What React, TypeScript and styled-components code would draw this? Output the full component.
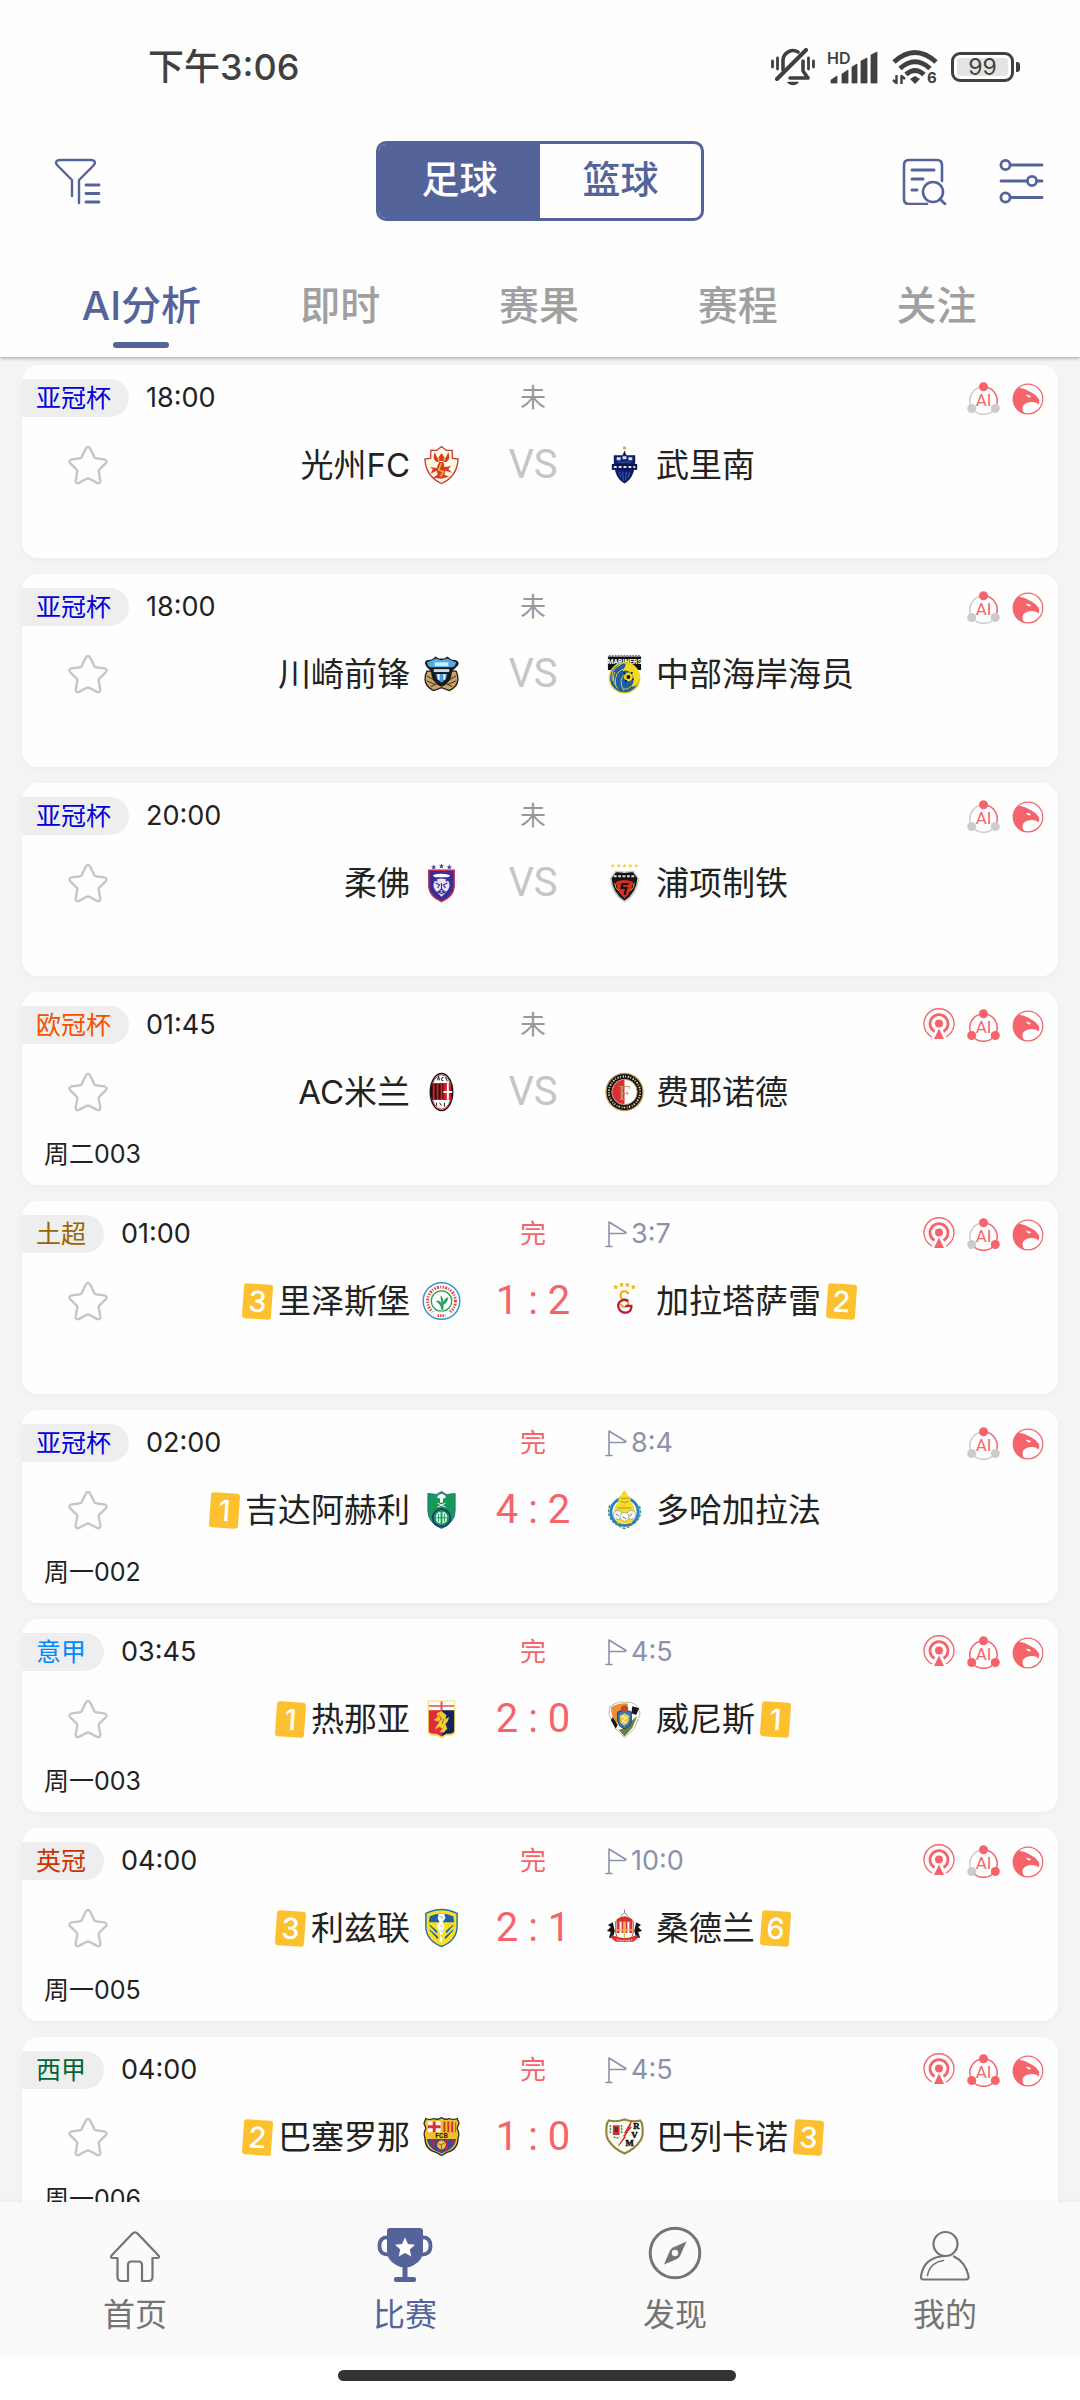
import React, { useState } from "react";
import styled, { createGlobalStyle, css } from "styled-components";

const BRAND = "#54649b";
const RED = "#f5646a";
const FONT = `Inter, "Noto Sans CJK SC", sans-serif`;

const GlobalStyle = createGlobalStyle`
  * { box-sizing: border-box; }
  body { margin: 0; background: #fff; font-family: ${FONT}; color: #222; }
  button { font: inherit; color: inherit; background: none; border: 0; padding: 0; margin: 0; cursor: pointer; }
  svg { display: block; flex: none; }
`;

const Screen = styled.div`
  display: flex;
  flex-direction: column;
  height: 100vh;
  background: #f4f4f4;
  overflow: hidden;
`;

/* ---------- header ---------- */

const Header = styled.header`
  flex: none;
  background: #fefefe;
  box-shadow: 0 1px 4px rgba(0, 0, 0, 0.35);
  z-index: 1;
`;

const StatusBar = styled.div`
  display: flex;
  align-items: center;
  justify-content: space-between;
  height: 134px;
  padding: 0 60px 0 148px;
  color: #404040;
`;

const Clock = styled.time`
  font-size: 36px;
  line-height: 52px;
  font-weight: 500;
`;

const StatusIcons = styled.div`
  display: flex;
  align-items: center;
  gap: 12px;
`;

const Battery = styled.div`
  display: flex;
  align-items: center;
  gap: 2px;
`;

const BatteryShell = styled.span`
  display: flex;
  width: 63px;
  height: 30px;
  padding: 3px;
  border: 3px solid #404040;
  border-radius: 9px;
`;

const BatteryFill = styled.span`
  flex: 1;
  border-radius: 3px;
  background: #e4e4e4;
  font-size: 23px;
  line-height: 19px;
  text-align: center;
`;

const BatteryTip = styled.span`
  width: 4px;
  height: 10px;
  border-radius: 0 3px 3px 0;
  background: #404040;
`;

const Toolbar = styled.div`
  display: grid;
  grid-template-columns: 1fr 328px 1fr;
  align-items: center;
  height: 94px;
`;

const Tools = styled.div`
  display: flex;
  gap: 52px;
  padding-left: 54px;
  &:last-child {
    justify-content: flex-end;
    padding: 0 36px 0 0;
  }
`;

const IconButton = styled.button`
  display: block;
  line-height: 0;
`;

const Segmented = styled.div`
  display: flex;
  height: 80px;
  border: 3px solid ${BRAND};
  border-radius: 10px;
  overflow: hidden;
`;

const Segment = styled.button<{ $active: boolean }>`
  && {
    flex: 1;
    padding-bottom: 4px;
    font-size: 38px;
    font-weight: 500;
    line-height: 70px;
    color: ${(p) => (p.$active ? "#fff" : BRAND)};
    background: ${(p) => (p.$active ? BRAND : "transparent")};
  }
`;

const Tabs = styled.nav`
  display: flex;
  height: 129px;
  padding: 0 44px 9px 42px;
`;

const Tab = styled.button<{ $active: boolean }>`
  && {
    flex: 1;
    display: flex;
    flex-direction: column;
    justify-content: flex-end;
    align-items: center;
    gap: 6px;
    font-size: 40px;
    line-height: 60px;
    font-weight: 500;
    color: ${(p) => (p.$active ? BRAND : "#a0a0a0")};
  }
  &::after {
    content: "";
    width: 56px;
    height: 6px;
    border-radius: 3px;
    background: ${(p) => (p.$active ? BRAND : "transparent")};
  }
`;

/* ---------- match list ---------- */

const List = styled.main`
  flex: 1;
  min-height: 0;
  display: flex;
  flex-direction: column;
  gap: 16px;
  padding: 8px 22px 0;
  overflow-y: auto;
  scrollbar-width: none;
`;

const Card = styled.article`
  flex: none;
  display: flex;
  flex-direction: column;
  padding: 14px 14px 16px 0;
  background: #fefefe;
  border-radius: 16px;
  box-shadow: 0 2px 6px rgba(0, 0, 0, 0.03);
`;

const threeColumns = css`
  display: grid;
  grid-template-columns: 1fr 144px 1fr;
  align-items: center;
`;

const InfoRow = styled.div`
  ${threeColumns}
  height: 38px;
  font-size: 27px;
  line-height: 38px;
`;

const TeamsRow = styled.div`
  ${threeColumns}
  height: 40px;
  margin: 28px 0 27px;
`;

const Kickoff = styled.div`
  display: flex;
  gap: 17px;
`;

const League = styled.span<{ $color: string }>`
  padding: 0 18px 0 14px;
  border-radius: 0 19px 19px 0;
  background: #eee;
  color: ${(p) => p.$color};
  font-size: 25px;
  line-height: 38px;
`;

const State = styled.span<{ $done: boolean }>`
  text-align: center;
  font-size: 26px;
  color: ${(p) => (p.$done ? RED : "#999")};
`;

const Extras = styled.div`
  display: flex;
  align-items: center;
  justify-content: space-between;
`;

const Corners = styled.span`
  display: flex;
  align-items: center;
  gap: 4px;
  color: #8b92a9;
`;

const Marks = styled.span`
  display: flex;
  align-items: center;
  gap: 12px;
`;

const HomeSide = styled.div`
  display: flex;
  align-items: center;
  justify-content: space-between;
  padding-left: 46px;
`;

const Team = styled.div`
  display: flex;
  align-items: center;
  gap: 12px;
  font-size: 33px;
  line-height: 40px;
`;

const NameGroup = styled.span`
  display: flex;
  align-items: center;
  gap: 6px;
`;

const YellowCards = styled.span`
  width: 29px;
  height: 35px;
  border-radius: 3px;
  background: #fdc02f;
  color: #fff;
  font-size: 29px;
  line-height: 36px;
  font-weight: 500;
  text-align: center;
  rotate: 4deg;
`;

const Score = styled.span<{ $done: boolean }>`
  font-family: Roboto, sans-serif;
  font-size: 40px;
  line-height: 40px;
  text-align: center;
  color: ${(p) => (p.$done ? RED : "#c6c6c6")};
`;

const Serial = styled.div`
  height: 30px;
  padding-left: 22px;
  font-size: 25px;
  line-height: 30px;
`;

/* ---------- bottom navigation ---------- */

const Footer = styled.footer`
  flex: none;
  background: #fff;
  z-index: 1;
`;

const BottomNav = styled.nav`
  display: flex;
  height: 154px;
  background: #fafafa;
  box-shadow: 0 -1px 5px rgba(0, 0, 0, 0.04);
`;

const NavItem = styled.button<{ $active: boolean }>`
  && {
    flex: 1;
    display: flex;
    flex-direction: column;
    align-items: center;
    gap: 9px;
    padding-top: 24px;
    font-size: 32px;
    line-height: 44px;
    color: ${(p) => (p.$active ? BRAND : "#747474")};
  }
`;

const GestureArea = styled.div`
  height: 44px;
  padding: 14px 6px 0 0;
`;

const GestureBar = styled.div`
  width: 37%;
  height: 11px;
  margin: 0 auto;
  border-radius: 6px;
  background: #333;
`;

/* ---------- interface icons ---------- */

const line = { fill: "none", stroke: "currentColor", strokeLinecap: "round", strokeLinejoin: "round" } as const;

const MutedBell = () => (
  <svg width="44" height="38" viewBox="0 0 44 38" {...line} strokeWidth="3.6">
    <path d="M12 22V12a10 10 0 0 1 15-8M32 13v10l5 7H19" />
    <path d="M6 31 35 2" strokeWidth="4" />
    <path d="M17 34.500h10q-5 4-10 0z" strokeWidth="1.500" fill="currentColor" />
    <path d="M1.500 13v6M6.500 10v11M37.500 10v11M42.500 13v6" strokeWidth="2.800" />
  </svg>
);

const Signal = () => (
  <svg width="52" height="40" viewBox="0 0 52 40" fill="currentColor">
    <text x="0" y="17" fontSize="16" fontWeight="600" fontFamily="Inter, sans-serif">HD</text>
    <path d="M4 33 10 29v7H4zM15 27l6-4v13h-6zM25 20l5-3v19h-5zM34 14l6-3v25h-6zM44 8l6-3v31h-6z" stroke="currentColor" strokeWidth=".8" strokeLinejoin="round" />
  </svg>
);

const Wifi = () => (
  <svg width="48" height="42" viewBox="-1 -3 48 42" {...line} strokeLinecap="butt" strokeWidth="5">
    <path d="M2 13Q23-6 44 13" />
    <path d="M8 19.500Q23 6 38 19.500" />
    <path d="M14 25.500Q23 17.500 32 25.500" />
    <path d="m18 30 5-3 5 3-5 5z" fill="currentColor" stroke="none" />
    <path d="M4.500 26v8l-3.500-3M9.500 35v-8l3.500 3" strokeWidth="2.400" />
    <text x="35" y="34" fontSize="15" fontWeight="700" fontFamily="Inter, sans-serif" fill="currentColor" stroke="none">6</text>
  </svg>
);

const FilterIcon = () => (
  <svg width="47" height="47" viewBox="0 0 47 47" {...line} stroke={BRAND} strokeWidth="2.400">
    <path d="M18 38V22L4 8Q1 5 2.500 3.300 3.500 2 6 2h31q2.500 0 3.500 1.300Q42 5 39 8L25 22v23" />
    <path d="M32 27h13M32 35.500h13M32 44h13" strokeWidth="2.800" />
  </svg>
);

const ReportIcon = () => (
  <svg width="45" height="47" viewBox="0 0 45 47" {...line} stroke={BRAND} strokeWidth="2.600">
    <path d="M40 23V7q0-5-5-5H7Q2 2 2 7v34q0 5 5 5h18" />
    <path d="M10 12h22M10 21h11M10 32h5" strokeWidth="3" />
    <circle cx="31" cy="34" r="10" />
    <path d="m38 41 5 5" />
  </svg>
);

const SlidersIcon = () => (
  <svg width="45" height="46" viewBox="0 0 45 46" {...line} stroke={BRAND} strokeWidth="2.800">
    <circle cx="6.500" cy="7" r="4.600" /><path d="M11.500 7H43" />
    <circle cx="33" cy="23" r="4.600" /><path d="M2 23h26M38 23h5" />
    <circle cx="6.500" cy="39.500" r="4.600" /><path d="M11.500 39.500H43" />
  </svg>
);

const FlagIcon = () => (
  <svg width="22" height="28" viewBox="0 0 22 28" {...line} strokeWidth="1.600">
    <path d="M4 26V2l17 10.500Q21 13.500 18 13.500H4M1 26.500h6" />
  </svg>
);

const StarIcon = () => (
  <svg width="40" height="40" viewBox="0 0 40 40" {...line} stroke="#c6c6c6" strokeWidth="2.400">
    <path d="M17.700 3.800q2.300-3.600 4.600 0l3.900 8.200q.5 1 1.600 1.200l8.400 1.200q3.800 1 1.500 3.900l-6.400 6.400q-.8.800-.6 1.900l1.600 8.800q.2 3.700-3.300 2.500l-7.700-4.100q-1.300-.6-2.600 0L11 37.900q-3.500 1.200-3.300-2.500l1.600-8.800q.2-1.100-.6-1.900l-6.400-6.400q-2.300-2.900 1.500-3.900l8.400-1.200q1.100-.2 1.600-1.200z" />
  </svg>
);

const LiveIcon = () => (
  <svg width="32" height="35" viewBox="0 0 32 35" fill="none" stroke={RED}>
    <path d="M9 29A15 15 0 1 1 23 29" strokeWidth="1.300" />
    <path d="M11.500 23.500a9 9 0 1 1 9 0" strokeWidth="2.800" />
    <circle cx="16" cy="15.500" r="4" fill={RED} stroke="none" />
    <path d="M16 20.500 21 31H11z" fill={RED} stroke="none" />
  </svg>
);

const AiIcon = ({ level }: { level: number }) => {
  const right = level > 1 ? RED : "#ccc";
  const left = level > 2 ? RED : "#ccc";
  return (
    <svg width="33" height="33" viewBox="0 0 33 33" fill="none" strokeWidth="1.500">
      <path d="M16.500 5A13.500 13.500 0 0 1 28.500 25" stroke={RED} />
      <path d="M28.500 25a13.500 13.500 0 0 1-24 0" stroke={right} />
      <path d="M4.500 25A13.500 13.500 0 0 1 16.500 5" stroke={left} />
      <circle cx="16.500" cy="4.800" r="4.500" fill={RED} />
      <circle cx="4.700" cy="26.500" r="4.500" fill={left} />
      <circle cx="28.300" cy="26.500" r="4.500" fill={right} />
      <text x="16.500" y="24" textAnchor="middle" fontSize="17" fontFamily="Roboto, sans-serif" fill={RED}>AI</text>
    </svg>
  );
};

const EagleIcon = () => (
  <svg width="32" height="34" viewBox="0 0 32 34">
    <circle cx="16" cy="18" r="14.800" fill="#fff" stroke={RED} strokeWidth="1.200" />
    <path d="M6.500 6.500q7 1 13 5 4 2 6 5 3 2 1 7-2-3-7-2.500-8 .5-9 5.500-.3 3 2 6Q3 29.500 1.200 19.500.8 11 6.500 6.500z" fill={RED} />
    <path d="m14 13.500 5 1.500-1 1.500q-3 0-4-3z" fill="#fff" />
  </svg>
);

const HomeIcon = () => (
  <svg width="54" height="58" viewBox="0 0 54 58" {...line} strokeWidth="2.200">
    <path d="M24.500 7.500q2.500-2.500 5 0L50 29q2.500 3-1 3h-4.500v19q0 4-4 4H34V39q0-3.500-3.500-3.500h-7Q20 35.500 20 39v16h-6.500q-4 0-4-4V32H5q-3.500 0-1-3z" />
  </svg>
);

const TrophyIcon = () => (
  <svg width="56" height="58" viewBox="0 0 56 58" fill="currentColor">
    <path d="M10 5q0-3 3-3h30q3 0 3 3v20q0 9-9 14-4 2.500-9 2.500T19 39q-9-5-9-14z" />
    <path d="M11 11.500q-8.500-.5-8.500 8.500T12 28.500M45 11.500q8.500-.5 8.500 8.500T44 28.500" fill="none" stroke="currentColor" strokeWidth="3.800" />
    <path d="M25.500 40h5v12h-5z" /><rect x="17" y="51" width="22" height="5" rx="2" />
    <path d="m28 11.500 3 6.500 7 .8-5.200 4.700 1.500 7L28 27l-6.300 3.500 1.500-7L18 18.800l7-.8z" fill="#fff" />
  </svg>
);

const CompassIcon = () => (
  <svg width="56" height="58" viewBox="0 0 56 58" {...line}>
    <circle cx="28" cy="27" r="24.800" strokeWidth="3" />
    <path d="m39.500 15.500-6.500 14.500q-1 2-3 3l-13 5.500 6-14q1-2 3-3z" fill="currentColor" stroke="none" />
    <circle cx="28" cy="27" r="3.200" fill="#fafafa" stroke="none" />
  </svg>
);

const UserIcon = () => (
  <svg width="54" height="58" viewBox="0 0 54 58" {...line} strokeWidth="2.200">
    <circle cx="27.500" cy="18" r="12" />
    <path d="M27 30Q6 31 3 50q-.5 3.500 2.500 3.500H48q3 0 2.500-3.500-3-14-14.500-19.500" />
    <path d="M25.500 34.500Q12 36.500 9.500 49.500" strokeWidth="1.600" />
  </svg>
);

/* ---------- club crests, all on a 40 x 40 grid ---------- */

const SHIELD = "M5 5Q20-1 35 5V20Q34 32 20 39 6 32 5 20z";

const crests: Record<string, React.ReactNode> = {
  gwangju: (
    <>
      <path d="M20 1 25 5h6v8l6 1q-1 18-17 25Q4 32 3 14l6-1V5h6z" fill="#fffbe9" stroke="#c8352f" strokeWidth="1.300" />
      <path d="M13 7q-3 7 2 10h10q5-3 2-10l-3 6-4-5-4 5zM18 16h4l1 6 7-1-3 3 4 4-7-2-1 4 5 2-8 2-9-1 5-3-1-4-6 3 2-5-3-2 7 1z" fill="#dc3b25" />
      <path d="M17 12v4M23 12v4M20 18l-3 7 5 2-3 5" stroke="#f7b63c" strokeWidth="1.500" fill="none" />
    </>
  ),
  buriram: (
    <>
      <circle cx="20" cy="2.500" r="1.700" fill="#f1a334" />
      <path d="m20 5 2 5h9v7q-1 17-11 22Q10 34 9 17v-7h9z" fill="#0d1f6c" />
      <path d="M7 19h26v6H7z" fill="#0a1550" />
      <path d="M12 12h4v3h-4zM18 11h4v3h-4zM24 12h4v3h-4zM9 21h3v2H9zM14 21h3v2h-3zM19 21h3v2h-3zM24 21h3v2h-3zM29 21h2v2h-2z" fill="#d9e2f6" />
      <path d="m15 27 1 6M18 27l1 9M22 27l-1 9M25 27l-1 6M13 17h14" stroke="#4a6bc0" strokeWidth=".8" />
    </>
  ),
  kawasaki: (
    <>
      <path d="M5 17Q-1 31 12 37l8-3 8 3q13-6 7-20z" fill="#c6a46c" stroke="#211d19" strokeWidth="1.300" />
      <path d="m5 22 7 4M5 27l9 4M35 22l-7 4M35 27l-9 4M9 33l6-3M31 33l-6-3" stroke="#3b2d18" />
      <path d="M10 5 14 2l3 2h6l3-2 4 3 5 1q4 2 2 5l-4 4-2 2q-1 13-11 16-10-3-11-16l-4-4Q1 8 5 6z" fill="#151b22" />
      <path d="M5 8q5-2 9-4l6 2 6-2q4 2 9 4-1 5-4 5H9Q6 13 5 8z" fill="#55a9e0" />
      <path d="M13 8h14v4H13z" fill="#c9ebff" />
      <path d="M12 15h16v3H12z" fill="#d8d8d8" />
      <path d="M14 20h12q-1 6-6 9-5-3-6-9z" fill="#3d9adb" /><path d="M16 20h2v6h-2zM22 20h2v6h-2z" fill="#fff" />
    </>
  ),
  mariners: (
    <>
      <path d="M3 2h34v14H3z" fill="#111" />
      <path d="M4 1h32" stroke="#777" strokeDasharray="2 1" />
      <text x="20" y="10" fontSize="7" fontWeight="700" textAnchor="middle" fill="#fff" fontFamily="Roboto, sans-serif">MARINERS</text>
      <circle cx="20" cy="24" r="15.500" fill="#1d5ea8" stroke="#ecd12d" strokeWidth="1.500" />
      <path d="M21 9q16 2 14 16-1 8-8 8 5-8 0-14-4-4-9-2 4-6 3-8z" fill="#f4d820" />
      <path d="M17 10Q4 15 8 27M23 14Q8 16 11 32M21 20q-8 5-2 17M10 18q-4 8 3 17M27 32q-4 5-8 3" fill="none" stroke="#f0d530" strokeWidth=".9" />
      <circle cx="24" cy="23" r="4.500" fill="#f4d820" /><circle cx="24" cy="23" r="2" fill="#111" />
      <path d="m19 19 2 1M28 18l-1 2M29 26l-1-1M21 28l1-2" stroke="#111" strokeWidth="1.500" />
    </>
  ),
  johor: (
    <>
      <path d="m12 1 1 2h2l-2 1 1 2-2-1-2 1 1-2-2-1h2zM20 0l1 2h2l-2 1 1 2-2-1-2 1 1-2-2-1h2zM28 1l1 2h2l-2 1 1 2-2-1-2 1 1-2-2-1h2z" fill="#43349b" />
      <path d="M7 7h26v17q-1 10-13 15Q8 34 7 24z" fill="#3a2d97" stroke="#c02c50" strokeWidth="1.500" />
      <path d="M11 12q8-3 18 0l-2 2H13z" fill="#fff" />
      <path d="M13 18q7-5 14 0 3 5-1 10l-6 6-6-6q-4-5-1-10z" fill="#e5e4f5" />
      <path d="m14 20 4 2-2 3M26 20l-4 2 2 3M20 20v6l-3 3h6l-3-3M15 29l5 2 5-2M12 17l4 1M28 17l-4 1" stroke="#3a2d97" fill="none" strokeWidth="1.200" />
    </>
  ),
  pohang: (
    <>
      {[8, 14, 20, 26, 32].map((x) => (
        <path key={x} transform={`translate(${x - 2} 0)`} d="m2 0 .7 1.500h1.600L3 2.600l.6 1.700L2 3.300.5 4.300 1 2.600-.2 1.500h1.500z" fill="#f5d04b" />
      ))}
      <path d="m11 8 9 1 9-1 5 7q-1 16-14 24Q7 31 6 15z" fill="#141414" stroke="#c9cacc" strokeWidth="1.600" />
      <path d="M11 19q9-4 18 0-2 11-9 17-7-6-9-17z" fill="#dc2b22" />
      <path d="M9 13h22" stroke="#d9d9d9" strokeDasharray="3 1.500" strokeWidth="2" />
      <path d="M24 21h-6l-1 4h5l-2 7" fill="none" stroke="#141414" strokeWidth="2.200" />
      <path d="M10 20q0 5 4 8M30 20q0 5-4 8" stroke="#e6b33c" fill="none" />
    </>
  ),
  milan: (
    <>
      <ellipse cx="20" cy="20" rx="11.500" ry="19" fill="#fff" stroke="#1a1315" strokeWidth="1.500" />
      <ellipse cx="20" cy="20" rx="10.400" ry="17.800" fill="none" stroke="#c9232d" />
      <path d="M10 11h20q2 9 0 17H10q-2-8 0-17z" fill="#18120f" />
      <path d="M11 11h2v17h-2zM15 11h2v17h-2zM19 11h2v17h-2zM22 11h8v17h-8z" fill="#d81f2b" />
      <path d="M22 19h9v2h-9zM25.500 11h2v17h-2z" fill="#fff" />
      <path d="m16 8 1-4 1 4M22 5q-2 0-2 2t2 1M24 5l2 4M15 31v3M18 31l2 3M23 31v4" stroke="#18120f" fill="none" />
    </>
  ),
  feyenoord: (
    <>
      <circle cx="20" cy="20" r="19" fill="#17120f" stroke="#b89b60" strokeWidth="1.300" />
      <circle cx="20" cy="20" r="16" fill="none" stroke="#e0d2ae" strokeWidth="2" strokeDasharray="1 1.700 1.500 1.200" />
      <circle cx="20" cy="20" r="13" fill="#fff" stroke="#b89b60" />
      <path d="M20 7.500a12.500 12.500 0 0 0 0 25z" fill="#dd2d3a" />
      <text x="20" y="28" fontSize="22" textAnchor="middle" fontFamily="Liberation Serif, serif" fill="#bb9a57">F</text>
    </>
  ),
  rize: (
    <>
      <circle cx="20" cy="20" r="18.800" fill="#fff" stroke="#3195cf" strokeWidth="1.500" />
      <circle cx="20" cy="20" r="14.300" fill="none" stroke="#dc4a3e" strokeWidth="3" strokeDasharray="1.500 1.300 2 1.200 1 1.500" />
      <circle cx="20" cy="20" r="10.500" fill="#fff" stroke="#2a9d5a" strokeWidth="1.300" />
      <path d="M20 29q-1-6-6-9 5-1 6 3-1-6-1-9 4 3 2 9 1-5 6-7 0 5-5 8v5z" fill="#24a257" />
      <path d="M10 31h20l-3 5H13z" fill="#fff" /><path d="M16 35h8" stroke="#dc4a3e" strokeWidth="2.600" strokeDasharray="1.500 1" />
    </>
  ),
  galatasaray: (
    <>
      {[[10, 5], [16, 2.5], [22, 2.5], [28, 5]].map(([x, y]) => (
        <path key={x} transform={`translate(${x} ${y})`} d="m1-2 .8 1.700 2 .2L2.200 1.300l.5 2L1 2.300l-1.700 1 .5-2-1.600-1.400 2-.2z" fill="#f1b32d" />
      ))}
      <path d="M24 13q-1-3-4-3-4 0-4 4t4 5q4 1 4 4t-4 3q-3 0-4-3" fill="none" stroke="#f2a521" strokeWidth="2.200" />
      <path d="M24 20q-5-3-9 1-3 4 0 8 2 3 6 3 5 0 6-5v-2h-6" fill="none" stroke="#b41f36" strokeWidth="2.300" />
    </>
  ),
  ahli: (
    <>
      <path d="m6 3 9 1 5-3 5 3 9-1v18q0 12-14 18Q6 33 6 21z" fill="#189a57" stroke="#23598f" strokeWidth=".8" />
      <circle cx="20" cy="28" r="9" fill="#189a57" stroke="#1e3a78" strokeWidth="2" />
      <path d="M17 5q3-2 6 0l1 2-3 1v4h-2V8l-3-1zM16 13l8 4M24 13l-8 4" stroke="#fff" strokeWidth="1" fill="#fff" />
      <path d="M14 27q1-5 5-5v12l-4-2zM26 27q-1-5-5-5v12l4-2z" fill="#e9f7ef" /><path d="M13 28h14M17 24v8M23 24v8" stroke="#189a57" />
    </>
  ),
  gharafa: (
    <>
      <path d="M5 15q-6 16 15 24 21-8 15-24" fill="none" stroke="#3c9c79" strokeWidth="1.500" strokeDasharray="3 1.300" />
      <circle cx="20" cy="22" r="14" fill="#fff" stroke="#2b83c5" strokeWidth="3" />
      <path d="M20 0q3 2 3 5 4 0 3 6l4 6q2 7-3 17H13q-5-10-3-17l4-6q-1-6 3-6 0-3 3-5z" fill="#f6dc26" />
      <path d="M16 8h8M16 11q4 3 8 0M13 18h14" stroke="#9f9c24" fill="none" />
      <circle cx="13" cy="25" r="4.500" fill="#f9f9f9" stroke="#8b9a96" strokeWidth=".8" />
      <circle cx="27" cy="25" r="4.500" fill="#f9f9f9" stroke="#8b9a96" strokeWidth=".8" />
      <circle cx="20" cy="27" r="4.500" fill="#fff" stroke="#8b9a96" strokeWidth=".8" />
      <path d="m11 24 3 2M25 26l3-2M18 27l4 2M13 34q7 3 14 0" stroke="#5a6d77" fill="none" />
    </>
  ),
  genoa: (
    <>
      <path d="M6 1h28v34q-5 3-9 2l-5 3-5-3q-5 1-9-2z" fill="#f3dc5d" />
      <path d="M7 2h26v9H7z" fill="#fff" /><path d="M7 6h26v1.500H7zM19 2h2v9h-2z" fill="#e0504b" />
      <path d="M7 11h13v27l-5-3q-5 1-8-2z" fill="#dd2c3a" /><path d="M20 11h13v22q-3 3-8 2l-5 3z" fill="#13265b" />
      <path d="m15 14 5-2 5 4-1 4 4-2-2 5-2 2 2 5-4 4-4-1 3-3-3-2-5 3 2-4 3-4-6-2 4-3z" fill="#f3cd2f" />
      <path d="m17 16 3 3-2 3M22 20l-1 5" stroke="#8c5c1a" fill="none" />
    </>
  ),
  venezia: (
    <>
      <path d="M5 7Q15 1 20 3q7-2 14 5l2 7-6 15-10 9-9-9L4 15z" fill="#fff" stroke="#b9b9a4" />
      <path d="M6 8q8-5 18-4l-3 8-9 12-5-8z" fill="#ec8f32" /><path d="m28 7 7 2-3 7-5-2zM8 18l5 8-2 4-5-9z" fill="#181818" />
      <path d="m33 17-5 12-8 9-6-7 4-1z" fill="#6b7f3f" />
      <path d="M13 13q7-4 14 0v9q-1 6-7 8-6-2-7-8z" fill="#3a77b5" stroke="#17395f" />
      <path d="m15 17 5-3 5 3-1 6-4 4-4-3z" fill="#f0c84a" /><path d="M16 8q4-4 8 0l-1 4h-6z" fill="#b94c2c" />
      <path d="m17 17 5 2-4 3 4 2" stroke="#fff" fill="none" />
    </>
  ),
  leeds: (
    <>
      <path d="M4 5Q20-3 36 5v15q-1 13-16 19Q5 33 4 20z" fill="#f7df23" stroke="#2c6faa" strokeWidth="1.500" />
      <path d="M8 8q12-6 24 0l1 6H7z" fill="#1e63a8" />
      <path d="m8 17 7 6v2zM8 22l8 7v2zM32 17l-7 6v2zM32 22l-8 7v2z" fill="#1e63a8" stroke="#1e63a8" />
      <path d="M17 6q3-2 6 0l1 4-3 4q3 4 1 8t-1 11l-1 2-2-2q2-6-1-11t1-8l-2-4z" fill="#fff" />
      <path d="m18 8 4 2M19 17l2 2M19 23h2M19 28h2" stroke="#89aac2" />
    </>
  ),
  sunderland: (
    <>
      <path d="M11 13h18v12q-1 7-9 9-8-2-9-9z" fill="#fff" stroke="#a9503b" />
      <path d="M12 13h3v12h-3zM17 13h2v12h-2zM21 13h2v12h-2zM25 13h3v12h-3z" fill="#db3439" />
      <path d="M20 13v18M11 22h18" stroke="#f1b258" strokeWidth="1.500" />
      <path d="M12 11q8-6 16 0v2H12z" fill="#d2332e" /><path d="M20 1v4M16 8l4-4 4 4" stroke="#8c8580" fill="none" />
      <path d="m8 14-5 3 3 2-4 4 4 1-2 6h4l2-7zM32 14l5 3-3 2 4 4-4 1 2 6h-4l-2-7z" fill="#171310" />
      <path d="M7 27q13 7 26 0l1 3-5 4H11l-5-4z" fill="#d9342f" /><path d="M12 32q8 2 16 0" stroke="#fff" strokeDasharray="2 1" fill="none" />
    </>
  ),
  barca: (
    <>
      <path d="M4 1q4 2 8 0 4 2 8-1 4 3 8 1 4 2 8 0l2 5-2 5q3 5 1 10 0 12-12 15l-5 3-5-3Q3 33 3 21q-2-5 1-10L2 6z" fill="#efc12c" stroke="#2b2924" strokeWidth="1.300" />
      <path d="M6 4h13v11H6z" fill="#fff" /><path d="M11 4h3v11h-3zM6 8h13v3H6z" fill="#dd2d36" />
      <path d="M22 4h2v11h-2zM26 4h2v11h-2zM30 4h2v11h-2zM34 5h1v10h-1z" fill="#d5322d" />
      <path d="M5 22h30q-1 8-9 12l-6 3-6-3q-8-4-9-12z" fill="#2b50a0" />
      <path d="M9 22h4v10l-4-4zM17 22h3v14l-3-2zM24 22h3v11l-3 2zM31 22h3q0 4-3 6z" fill="#b5254c" />
      <text x="20" y="21" fontSize="7" fontWeight="700" textAnchor="middle" fontFamily="Roboto, sans-serif" fill="#222">FCB</text>
      <circle cx="20" cy="28" r="4.500" fill="#eec23a" /><path d="m17 27 3 1 3-2M20 28v4" stroke="#836818" fill="none" />
    </>
  ),
  rayo: (
    <>
      <path d="M4 3q8 2 16-1 8 3 16 1l2 3q2 13-2 18-5 8-16 13Q9 32 4 24 0 19 2 6z" fill="#fffef6" stroke="#94853a" strokeWidth="2.200" />
      <path d="M8 8h7v10H8z" fill="#cd3333" /><path d="M5.500 8v9M17 8v9M9 20l3 1 3-1" stroke="#3b8a3f" strokeWidth="1.600" fill="none" strokeDasharray="2 1" />
      <path d="M10 10h3v5h-3z" fill="#4a3424" />
      <path d="m27 4-7 12 3-1-9 14 7-9-2-1 8-9-2 1z" fill="#dc2c2c" stroke="#dc2c2c" />
      <g fontSize="9" fontWeight="700" fontFamily="Liberation Serif, serif" fill="#111" stroke="#111" strokeWidth=".5">
        <text x="29" y="12">R</text><text x="27" y="21">V</text><text x="21" y="29">M</text>
      </g>
    </>
  ),
};

const Crest = ({ id, name }: { id: string; name: string }) => (
  <svg width="39" height="40" viewBox="0 0 40 40" role="img" aria-label={name}>
    {crests[id] ?? <path d={SHIELD} fill="#ccc" />}
  </svg>
);

/* ---------- data ---------- */

interface Side { name: string; crest: string; cards?: number }
interface Match {
  league: string; color: string; time: string; home: Side; away: Side;
  score?: string; corners?: string; live?: boolean; ai: number; serial?: string;
}

const AFC = "#0000dd";

const matches: Match[] = [
  { league: "亚冠杯", color: AFC, time: "18:00", home: { name: "光州FC", crest: "gwangju" }, away: { name: "武里南", crest: "buriram" }, ai: 1 },
  { league: "亚冠杯", color: AFC, time: "18:00", home: { name: "川崎前锋", crest: "kawasaki" }, away: { name: "中部海岸海员", crest: "mariners" }, ai: 1 },
  { league: "亚冠杯", color: AFC, time: "20:00", home: { name: "柔佛", crest: "johor" }, away: { name: "浦项制铁", crest: "pohang" }, ai: 1 },
  { league: "欧冠杯", color: "#f75000", time: "01:45", home: { name: "AC米兰", crest: "milan" }, away: { name: "费耶诺德", crest: "feyenoord" }, live: true, ai: 3, serial: "周二003" },
  { league: "土超", color: "#996600", time: "01:00", home: { name: "里泽斯堡", crest: "rize", cards: 3 }, away: { name: "加拉塔萨雷", crest: "galatasaray", cards: 2 }, score: "1 : 2", corners: "3:7", live: true, ai: 2 },
  { league: "亚冠杯", color: AFC, time: "02:00", home: { name: "吉达阿赫利", crest: "ahli", cards: 1 }, away: { name: "多哈加拉法", crest: "gharafa" }, score: "4 : 2", corners: "8:4", ai: 1, serial: "周一002" },
  { league: "意甲", color: "#0088ff", time: "03:45", home: { name: "热那亚", crest: "genoa", cards: 1 }, away: { name: "威尼斯", crest: "venezia", cards: 1 }, score: "2 : 0", corners: "4:5", live: true, ai: 3, serial: "周一003" },
  { league: "英冠", color: "#cc3300", time: "04:00", home: { name: "利兹联", crest: "leeds", cards: 3 }, away: { name: "桑德兰", crest: "sunderland", cards: 6 }, score: "2 : 1", corners: "10:0", live: true, ai: 2, serial: "周一005" },
  { league: "西甲", color: "#006633", time: "04:00", home: { name: "巴塞罗那", crest: "barca", cards: 2 }, away: { name: "巴列卡诺", crest: "rayo", cards: 3 }, score: "1 : 0", corners: "4:5", live: true, ai: 3, serial: "周一006" },
];

const MatchCard = ({ match }: { match: Match }) => {
  const { home, away } = match;
  const done = Boolean(match.score);
  return (
    <Card>
      <InfoRow>
        <Kickoff>
          <League $color={match.color}>{match.league}</League>
          <time>{match.time}</time>
        </Kickoff>
        <State $done={done}>{done ? "完" : "未"}</State>
        <Extras>
          <Corners>{match.corners && <><FlagIcon />{match.corners}</>}</Corners>
          <Marks>
            {match.live && <LiveIcon />}
            <AiIcon level={match.ai} />
            <EagleIcon />
          </Marks>
        </Extras>
      </InfoRow>
      <TeamsRow>
        <HomeSide>
          <IconButton aria-label="收藏"><StarIcon /></IconButton>
          <Team>
            <NameGroup>
              {home.cards && <YellowCards>{home.cards}</YellowCards>}
              {home.name}
            </NameGroup>
            <Crest id={home.crest} name={home.name} />
          </Team>
        </HomeSide>
        <Score $done={done}>{match.score ?? "VS"}</Score>
        <Team>
          <Crest id={away.crest} name={away.name} />
          <NameGroup>
            {away.name}
            {away.cards && <YellowCards>{away.cards}</YellowCards>}
          </NameGroup>
        </Team>
      </TeamsRow>
      <Serial>{match.serial}</Serial>
    </Card>
  );
};

const sports = ["足球", "篮球"];
const tabs = ["AI分析", "即时", "赛果", "赛程", "关注"];
const navItems = [
  { label: "首页", Icon: HomeIcon },
  { label: "比赛", Icon: TrophyIcon },
  { label: "发现", Icon: CompassIcon },
  { label: "我的", Icon: UserIcon },
];

export default function App() {
  const [sport, setSport] = useState(0);
  const [tab, setTab] = useState(0);
  const [page, setPage] = useState(1);

  return (
    <Screen>
      <GlobalStyle />
      <Header>
        <StatusBar>
          <Clock>下午3:06</Clock>
          <StatusIcons>
            <MutedBell />
            <Signal />
            <Wifi />
            <Battery>
              <BatteryShell><BatteryFill>99</BatteryFill></BatteryShell>
              <BatteryTip />
            </Battery>
          </StatusIcons>
        </StatusBar>
        <Toolbar>
          <Tools>
            <IconButton aria-label="筛选"><FilterIcon /></IconButton>
          </Tools>
          <Segmented>
            {sports.map((s, i) => (
              <Segment key={s} $active={i === sport} onClick={() => setSport(i)}>{s}</Segment>
            ))}
          </Segmented>
          <Tools>
            <IconButton aria-label="报告"><ReportIcon /></IconButton>
            <IconButton aria-label="设置"><SlidersIcon /></IconButton>
          </Tools>
        </Toolbar>
        <Tabs>
          {tabs.map((t, i) => (
            <Tab key={t} $active={i === tab} onClick={() => setTab(i)}>{t}</Tab>
          ))}
        </Tabs>
      </Header>
      <List>
        {matches.map((m) => <MatchCard key={m.home.name} match={m} />)}
      </List>
      <Footer>
        <BottomNav>
          {navItems.map(({ label, Icon }, i) => (
            <NavItem key={label} $active={i === page} onClick={() => setPage(i)}>
              <Icon />
              {label}
            </NavItem>
          ))}
        </BottomNav>
        <GestureArea><GestureBar /></GestureArea>
      </Footer>
    </Screen>
  );
}
